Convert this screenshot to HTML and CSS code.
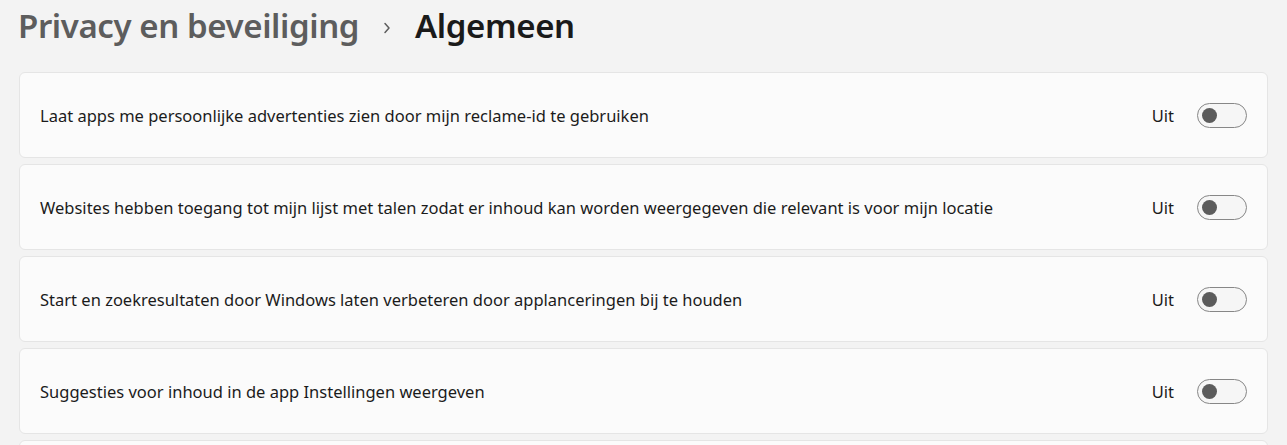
FILE: index.html
```html
<!DOCTYPE html>
<html lang="nl">

<head>
  <meta charset="UTF-8">
  <meta name="viewport" content="width=device-width, initial-scale=1.0">
  <title>Privacy en beveiliging - Algemeen</title>
  <link rel="stylesheet" href="styles.css">
</head>

<body>
  <div class="page">
    <h1 class="breadcrumb">
      <span class="crumb-parent">Privacy en beveiliging</span>
      <svg class="crumb-chevron" width="8" height="14" viewBox="0 0 8 14" aria-hidden="true">
        <path d="M2 2.5 L6 7 L2 11.5" fill="none" stroke="#5d5d5d" stroke-width="1.5" stroke-linecap="round" stroke-linejoin="round"/>
      </svg>
      <span class="crumb-current">Algemeen</span>
    </h1>

    <div class="settings">
      <div class="setting-card">
        <span class="setting-label">Laat apps me persoonlijke advertenties zien door mijn reclame-id te gebruiken</span>
        <div class="setting-control">
          <span class="state">Uit</span>
          <span class="toggle"><span class="knob"></span></span>
        </div>
      </div>
      <div class="setting-card">
        <span class="setting-label">Websites hebben toegang tot mijn lijst met talen zodat er inhoud kan worden weergegeven die relevant is voor mijn locatie</span>
        <div class="setting-control">
          <span class="state">Uit</span>
          <span class="toggle"><span class="knob"></span></span>
        </div>
      </div>
      <div class="setting-card">
        <span class="setting-label">Start en zoekresultaten door Windows laten verbeteren door applanceringen bij te houden</span>
        <div class="setting-control">
          <span class="state">Uit</span>
          <span class="toggle"><span class="knob"></span></span>
        </div>
      </div>
      <div class="setting-card">
        <span class="setting-label">Suggesties voor inhoud in de app Instellingen weergeven</span>
        <div class="setting-control">
          <span class="state">Uit</span>
          <span class="toggle"><span class="knob"></span></span>
        </div>
      </div>
      <div class="setting-card">
        <span class="setting-label"></span>
      </div>
    </div>
  </div>
</body>

</html>
```

FILE: styles.css
```css
body {
  margin: 0;
  padding: 0;
  background: #f3f3f3;
  font-family: 'Noto Sans', 'Open Sans', sans-serif;
  color: #1b1b1b;
  overflow: hidden;
  height: 445px;
}

.page {
  padding: 0 19px 0 19px;
}

.breadcrumb {
  margin: 0;
  height: 72px;
  display: flex;
  align-items: flex-start;
  padding-top: 4px;
  box-sizing: border-box;
  font-size: 33px;
  font-weight: 600;
  letter-spacing: -0.4px;
  line-height: 44px;
}

.crumb-parent {
  color: #5d5d5d;
  margin-left: -1px;
}

.crumb-chevron {
  margin: 17px 24px 0 24px;
}

.crumb-current {
  color: #1a1a1a;
}

.settings {
  display: flex;
  flex-direction: column;
  gap: 6px;
}

.setting-card {
  background: #fbfbfb;
  border: 1px solid #e5e5e5;
  border-radius: 6px;
  height: 86px;
  box-sizing: border-box;
  display: flex;
  align-items: center;
  justify-content: space-between;
  padding: 0 20px 0 20px;
}

.setting-label {
  font-size: 16.5px;
}

.setting-control {
  display: flex;
  align-items: center;
  gap: 23px;
}

.state {
  font-size: 16.5px;
}

.toggle {
  width: 50px;
  height: 25px;
  box-sizing: border-box;
  border: 1px solid #878787;
  border-radius: 13px;
  background: #f6f6f6;
  display: flex;
  align-items: center;
  padding-left: 4px;
}

.knob {
  width: 15px;
  height: 15px;
  border-radius: 50%;
  background: #5c5c5c;
}
```
